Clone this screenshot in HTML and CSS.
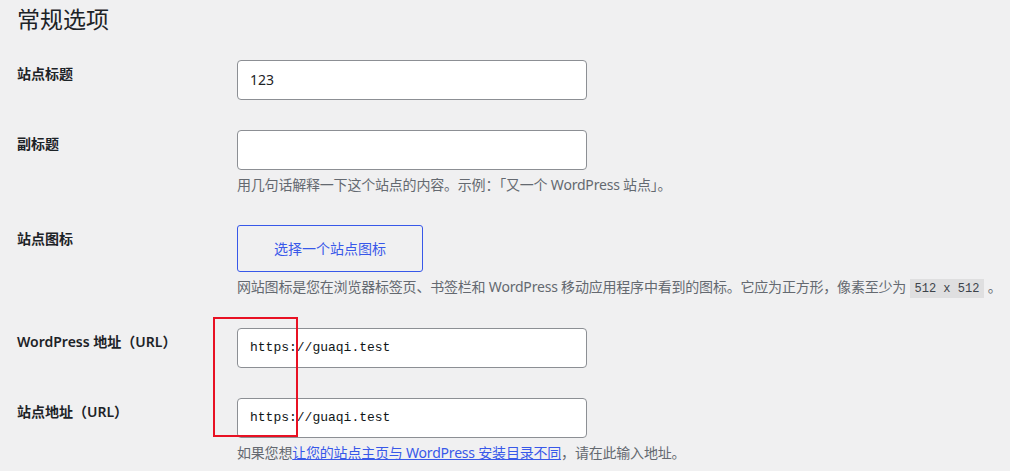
FILE: index.html
```html
<!DOCTYPE html>
<html lang="zh-CN">
<head>
    <meta charset="UTF-8">
    <meta name="viewport" content="width=device-width, initial-scale=1.0">
    <title>常规选项</title>
    <link rel="stylesheet" href="styles.css">
</head>
<body>

    <div class="wrap">
        <h1>常规选项</h1>

        <table class="form-table">
            <tr>
                <th><label for="blogname">站点标题</label></th>
                <td><input type="text" id="blogname" class="regular-text" value="123"></td>
            </tr>
            <tr>
                <th><label for="blogdescription">副标题</label></th>
                <td>
                    <input type="text" id="blogdescription" class="regular-text" value="">
                    <p class="description">用几句话解释一下这个站点的内容。示例：「又一个 WordPress 站点」。</p>
                </td>
            </tr>
            <tr>
                <th>站点图标</th>
                <td>
                    <button type="button" class="button-hero">选择一个站点图标</button>
                    <p class="description">网站图标是您在浏览器标签页、书签栏和 WordPress 移动应用程序中看到的图标。它应为正方形，像素至少为 <code>512 x 512</code> 。</p>
                </td>
            </tr>
            <tr>
                <th><label for="siteurl">WordPress 地址（URL）</label></th>
                <td><input type="url" id="siteurl" class="regular-text code" value="https://guaqi.test"></td>
            </tr>
            <tr>
                <th><label for="home">站点地址（URL）</label></th>
                <td>
                    <input type="url" id="home" class="regular-text code" value="https://guaqi.test">
                    <p class="description">如果您想<a href="#">让您的站点主页与 WordPress 安装目录不同</a>，请在此输入地址。</p>
                </td>
            </tr>
        </table>

        <!-- highlight box drawn over the two URL fields -->
        <div class="highlight"></div>
    </div>

</body>
</html>
```

FILE: styles.css
```css
body {
    margin: 0;
    background-color: #f0f0f1;
    color: #1d2327;
    font-family: "Noto Sans", "Noto Sans CJK SC", sans-serif;
    font-size: 14px;
}
.wrap {
    position: relative;
    padding-left: 17px;
}
h1 {
    margin: 0;
    padding-top: 5px;
    font-size: 23px;
    font-weight: 400;
    line-height: 1.3;
}
.form-table {
    width: 100%;
    table-layout: fixed;
    margin-top: 10px;
    border-collapse: collapse;
}
.form-table th {
    width: 200px;
    padding: 20px 10px 20px 0;
    vertical-align: top;
    text-align: left;
    font-weight: 600;
    line-height: 1.3;
    white-space: nowrap;
}
.form-table td {
    padding: 15px 10px;
    vertical-align: top;
    line-height: 1.5;
}
.regular-text {
    display: block;
    box-sizing: border-box;
    width: 350px;
    height: 40px;
    padding: 0 12px;
    margin: 0;
    background: #ffffff;
    border: 1px solid #8c8f94;
    border-radius: 4px;
    color: #1d2327;
    font-family: "Noto Sans", sans-serif;
    font-size: 14px;
}
.regular-text.code {
    font-family: "Liberation Mono", monospace;
    font-size: 13px;
    color: #101517;
}
.button-hero {
    display: block;
    box-sizing: border-box;
    height: 47px;
    padding: 0 36px;
    background-color: transparent;
    border: 1px solid #3858e9;
    border-radius: 3px;
    color: #3858e9;
    font-family: "Noto Sans CJK SC", sans-serif;
    font-size: 14px;
    cursor: pointer;
}
.description {
    margin: 4px 0 0;
    color: #646970;
    font-size: 14px;
    line-height: 1.5;
    letter-spacing: -0.2px;
    white-space: nowrap;
}
.description a {
    color: #3858e9;
}
code {
    padding: 3px 5px 2px;
    background: rgba(0, 0, 0, 0.07);
    color: #3c434a;
    font-family: "Liberation Mono", monospace;
    font-size: 12px;
    letter-spacing: 0;
}
.highlight {
    position: absolute;
    left: 213px;
    top: 317px;
    width: 81px;
    height: 116px;
    border: 2px solid #e81123;
}
```
